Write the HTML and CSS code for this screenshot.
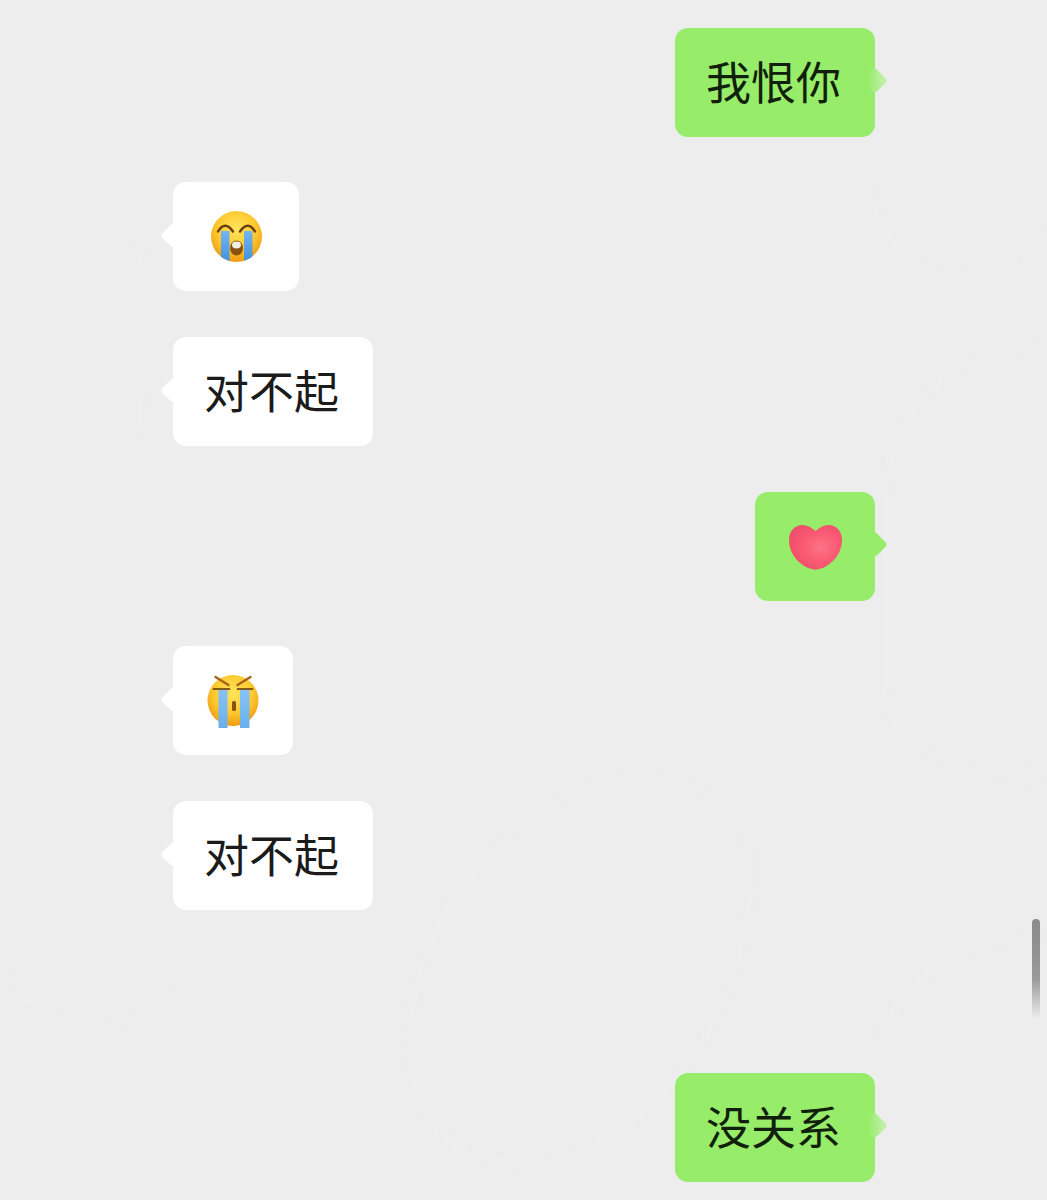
FILE: index.html
```html
<!DOCTYPE html>
<html lang="zh-CN">
<head>
  <meta charset="UTF-8">
  <meta name="viewport" content="width=device-width, initial-scale=1.0">
  <title>聊天记录</title>
  <link rel="stylesheet" href="styles.css">
</head>

<body>
  <svg width="0" height="0" class="defs">
    <defs>
      <radialGradient id="face" cx="50%" cy="36%" r="64%">
        <stop offset="0" stop-color="#ffe45c"/>
        <stop offset="0.6" stop-color="#fdc92f"/>
        <stop offset="1" stop-color="#f09a12"/>
      </radialGradient>
      <linearGradient id="tear" x1="0" y1="0" x2="0" y2="1">
        <stop offset="0" stop-color="#74b6ef"/>
        <stop offset="1" stop-color="#3f8fe0"/>
      </linearGradient>
      <linearGradient id="tearLight" x1="0" y1="0" x2="0" y2="1">
        <stop offset="0" stop-color="#86c2f6"/>
        <stop offset="1" stop-color="#69b0ec"/>
      </linearGradient>
      <radialGradient id="heart" cx="60%" cy="50%" r="60%">
        <stop offset="0" stop-color="#fd7488"/>
        <stop offset="0.55" stop-color="#fb5a74"/>
        <stop offset="1" stop-color="#ee4f6a"/>
      </radialGradient>
    </defs>
  </svg>

  <!-- chat wallpaper, barely lighter than the page -->
  <svg class="wallpaper" width="1047" height="1200" viewBox="0 0 1047 1200">
    <g fill="none" stroke="#efefef" stroke-width="4">
      <path d="M870 190C880 250 925 278 965 276C1005 274 1040 240 1047 200"/>
      <path d="M1047 350C960 345 890 400 885 500V690C890 750 960 780 1047 775"/>
      <path d="M410 1060C400 950 480 830 590 785C660 760 740 790 750 850C760 960 700 1110 560 1160C470 1180 415 1130 410 1060Z"/>
      <path d="M880 1040C900 980 960 940 1047 935"/>
      <path d="M0 960C20 1010 70 1030 110 1025C140 1020 165 1000 170 970"/>
      <path d="M140 230C142 250 140 265 135 282M140 385C143 405 140 425 132 440"/>
    </g>
  </svg>

  <div class="chat">
    <div class="row mine">
      <div class="bubble fade">我恨你</div>
    </div>

    <div class="row">
      <div class="bubble emoji wide">
        <!-- loudly crying face -->
        <svg width="53" height="53" viewBox="0 0 53 53">
          <clipPath id="faceClip"><circle cx="26.5" cy="26.5" r="25.5"/></clipPath>
          <circle cx="26.5" cy="26.5" r="25.5" fill="url(#face)"/>
          <g clip-path="url(#faceClip)">
            <rect x="11" y="21" width="8.5" height="32" fill="url(#tear)"/>
            <rect x="34" y="21" width="8.5" height="32" fill="url(#tear)"/>
          </g>
          <path d="M8 21.5Q15 10 23 21.5" fill="none" stroke="#6b3d0c" stroke-width="2.4" stroke-linecap="round"/>
          <path d="M30 21.5Q38 10 45 21.5" fill="none" stroke="#6b3d0c" stroke-width="2.4" stroke-linecap="round"/>
          <ellipse cx="26.5" cy="38" rx="6.5" ry="7.5" fill="#8a5212"/>
          <ellipse cx="26.5" cy="35" rx="4.5" ry="3.4" fill="#f4efe6"/>
        </svg>
      </div>
    </div>

    <div class="row">
      <div class="bubble">对不起</div>
    </div>

    <div class="row mine">
      <div class="bubble emoji">
        <svg class="heart" width="53" height="45" viewBox="0 0 53 45">
          <path d="M26.5 6C22 2 18 0 13.5 0C5.5 0 0 6.5 0 15C0 30 12 41 21 43.5C25 45 28 45 32 43.5C41 41 53 30 53 15C53 6.5 47.5 0 39.5 0C35 0 31 2 26.5 6Z" fill="url(#heart)"/>
        </svg>
      </div>
    </div>

    <div class="row">
      <div class="bubble emoji">
        <!-- crying face with the eyes squeezed shut -->
        <svg width="53" height="55" viewBox="0 0 53 55">
          <circle cx="26" cy="27.5" r="25.5" fill="url(#face)"/>
          <rect x="11.5" y="17" width="9" height="38" fill="url(#tearLight)"/>
          <rect x="33" y="17" width="9.5" height="38" fill="url(#tearLight)"/>
          <path d="M6.5 16H22.5M30.5 16H45.5" stroke="#5a340a" stroke-width="1.7" stroke-linecap="round"/>
          <path d="M8.5 4L21.5 12M43.5 4L30.5 12" stroke="#a8621a" stroke-width="2.4" stroke-linecap="round"/>
          <rect x="25" y="28" width="4" height="10" rx="1.5" fill="#8a5212"/>
        </svg>
      </div>
    </div>

    <div class="row">
      <div class="bubble">对不起</div>
    </div>

    <div class="row mine last">
      <div class="bubble fade">没关系</div>
    </div>
  </div>

  <div class="scrollbar"></div>
</body>
</html>
```

FILE: styles.css
```css
html, body {
  height: 100%;
}

body {
  margin: 0;
  background-color: #ededed;
  font-family: "Noto Sans CJK SC", "Liberation Sans", sans-serif;
  overflow: hidden;
  position: relative;
}

.defs {
  position: absolute;
}

.wallpaper {
  position: absolute;
  left: 0;
  top: 0;
  filter: blur(3px);
}

.chat {
  position: relative;
  display: flex;
  flex-direction: column;
  gap: 45.6px;
  padding: 27.8px 172px 0 173px;
}

.row {
  display: flex;
}

.row.mine {
  justify-content: flex-end;
}

.row.last {
  margin-top: 117.6px;
}

.bubble {
  position: relative;
  display: flex;
  align-items: center;
  justify-content: center;
  width: 200px;
  height: 109px;
  box-sizing: border-box;
  padding: 0 34px 4px 31px;
  background-color: #fff;
  border-radius: 13px;
  color: #1b1b1b;
  font-size: 45px;
}

.bubble::before {
  content: "";
  position: absolute;
  left: -9px;
  top: 44px;
  width: 19px;
  height: 19px;
  background-color: #fff;
  border-radius: 4px;
  transform: rotate(45deg);
}

.mine .bubble {
  background-color: #97ec69;
  color: #10200a;
}

.mine .bubble::before {
  left: auto;
  right: -9px;
  top: 43px;
  background-color: #97ec69;
}

/* tail washes out towards the tip on some of the sent messages */
.mine .bubble.fade::before {
  background: linear-gradient(45deg, #97ec69 25%, #bdefa4 80%);
}

.bubble.emoji {
  width: 120px;
  padding: 0;
}

.bubble.emoji.wide {
  width: 126px;
}

.heart {
  margin-top: 2px;
}

.scrollbar {
  position: absolute;
  right: 7px;
  top: 919px;
  width: 8px;
  height: 100px;
  border-radius: 4px 4px 0 0;
  background: linear-gradient(#8a8a8a 0%, #9a9a9a 60%, #ededed 100%);
}
```
